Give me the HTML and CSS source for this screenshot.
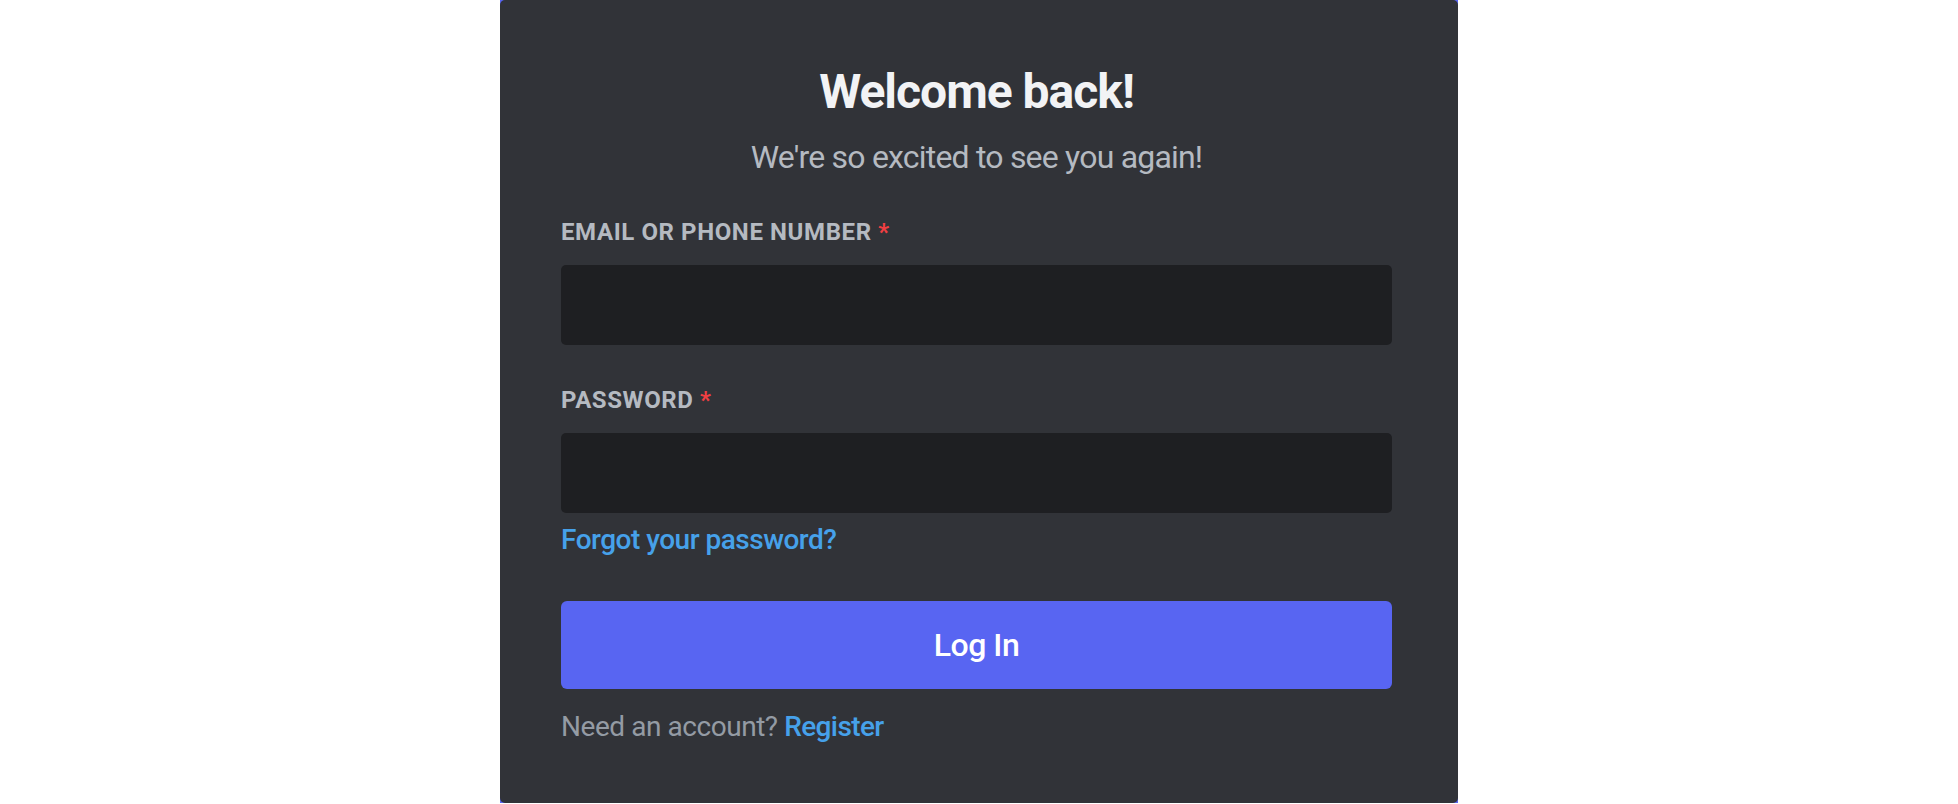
FILE: index.html
```html
<!DOCTYPE html>
<html lang="en">
<head>
<meta charset="utf-8">
<title>Login</title>
<link rel="stylesheet" href="styles.css">
</head>
<body>
<div class="page">
  <div class="frame">
    <main class="card">
      <h1 class="title">Welcome back!</h1>
      <p class="subtitle">We're so excited to see you again!</p>
      <form class="form">
        <label class="label" for="email">Email or Phone Number <span class="req">*</span></label>
        <input class="input" id="email" type="text">
        <label class="label label-pw" for="password">Password <span class="req">*</span></label>
        <input class="input" id="password" type="password">
        <a class="link forgot" href="#">Forgot your password?</a>
        <button class="btn" type="button">Log In</button>
        <p class="register">Need an account? <a class="link" href="#">Register</a></p>
      </form>
    </main>
  </div>
</div>
</body>
</html>
```

FILE: styles.css
```css
* { box-sizing: border-box; }
html, body { margin: 0; padding: 0; background: #ffffff; }
body { font-family: Roboto, "Noto Sans", sans-serif; }

.page {
  display: flex;
  justify-content: center;
  height: 804px;
}
.frame {
  width: 958px;
  height: 803px;
  background: #5865f2;
}
.card {
  height: 100%;
  background: #313338;
  border-radius: 5px;
  padding: 62px 66px 0 61px;
}
.title {
  margin: 0;
  font-size: 48px;
  line-height: 60px;
  font-weight: 700;
  letter-spacing: -1px;
  color: #f2f3f5;
  text-align: center;
}
.subtitle {
  margin: 15px 0 0;
  font-size: 32px;
  line-height: 40px;
  letter-spacing: -0.8px;
  color: #b5bac1;
  text-align: center;
}
.form {
  display: flex;
  flex-direction: column;
  align-items: flex-start;
  margin-top: 39px;
}
.label {
  font-size: 24px;
  line-height: 32px;
  font-weight: 700;
  text-transform: uppercase;
  letter-spacing: 0.6px;
  color: #b5bac1;
  margin-bottom: 17px;
}
.label-pw { margin-top: 39px; }
.req { color: #f23f42; }
.input {
  display: block;
  width: 100%;
  height: 80px;
  border: none;
  border-radius: 5px;
  background: #1e1f22;
  outline: none;
}
.link {
  color: #46a1ea;
  text-decoration: none;
}
.forgot {
  margin-top: 11px;
  font-size: 28px;
  line-height: 32px;
  font-weight: 500;
  letter-spacing: -0.5px;
}
.btn {
  margin-top: 45px;
  width: 100%;
  height: 88px;
  border: none;
  border-radius: 6px;
  background: #5865f2;
  color: #ffffff;
  font-family: inherit;
  font-size: 32px;
  font-weight: 500;
  letter-spacing: -0.5px;
}
.register {
  margin: 22px 0 0;
  font-size: 28px;
  line-height: 32px;
  letter-spacing: -0.45px;
  color: #949ba4;
}
.register .link { font-weight: 500; letter-spacing: -0.6px; }
```
